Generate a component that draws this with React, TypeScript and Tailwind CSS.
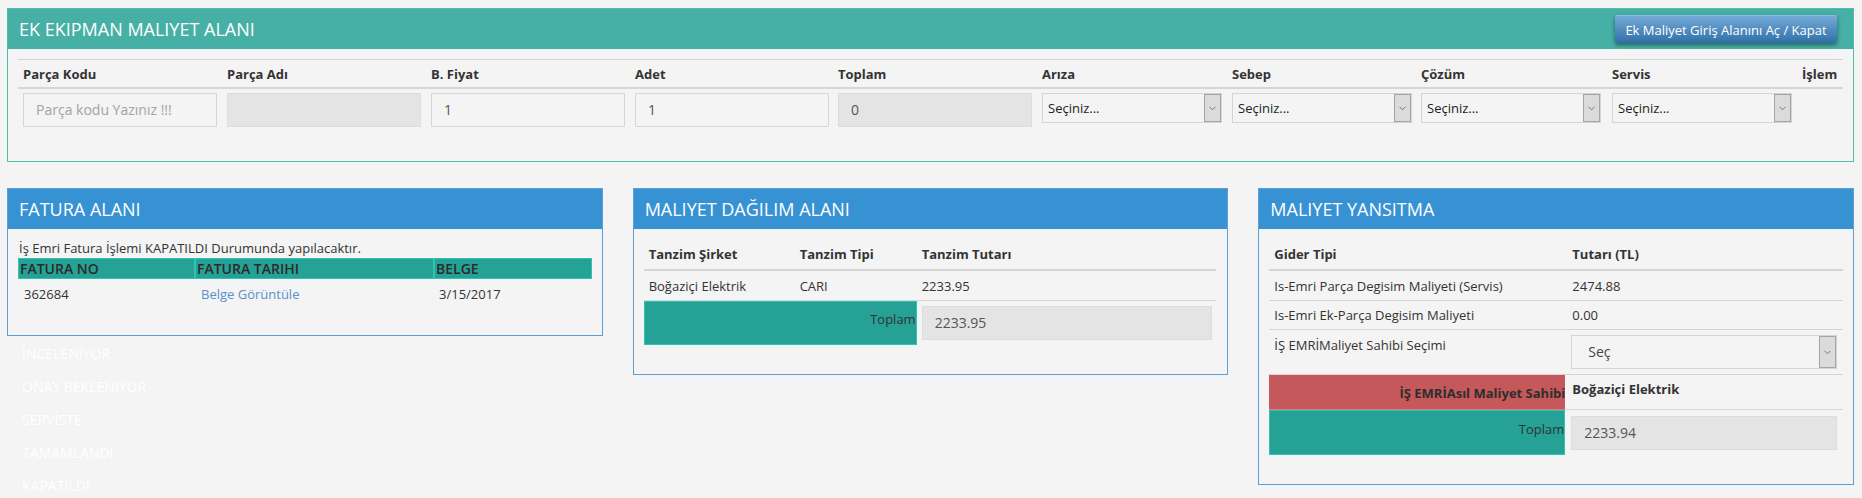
import React from "react";

function Chevron() {
  return (
    <svg width="7" height="5" viewBox="0 0 7 5" fill="none">
      <path d="M0.5 0.8 L3.5 3.8 L6.5 0.8" stroke="#6b6b6b" strokeWidth="0.9" />
    </svg>
  );
}

function FakeSelect({ text, className, textClass }: { text: string; className: string; textClass: string }) {
  return (
    <div className={`flex items-stretch border border-[#d4d4d4] bg-[#f4f4f4] ${className}`}>
      <div className={`flex flex-1 items-center ${textClass}`}>{text}</div>
      <div className="flex w-[17px] items-center justify-center border border-[#a4a4a4] bg-[#dbdbdb]">
        <Chevron />
      </div>
    </div>
  );
}

function BluePanel({ title, children, bodyClass }: { title: string; children: React.ReactNode; bodyClass: string }) {
  return (
    <div className="border border-[#5b9fd6]">
      <div className="flex h-[40px] items-center bg-[#3792d4] pl-[11px]">
        <h2 className="text-[18px] leading-[24px] font-normal text-white">{title}</h2>
      </div>
      <div className={`px-[10px] pt-[10px] ${bodyClass}`}>{children}</div>
    </div>
  );
}

const labels = ["Parça Kodu", "Parça Adı", "B. Fiyat", "Adet", "Toplam", "Arıza", "Sebep", "Çözüm", "Servis", "İşlem"];

export default function App() {
  return (
    <div className="h-[498px] w-full overflow-hidden bg-[#f4f4f4] pl-[7px] pr-[8px] pt-[8px] font-['Open_Sans',sans-serif] text-[13px] leading-[18px] text-[#333]">
      {/* EK EKIPMAN MALIYET ALANI */}
      <div className="border border-[#52bcaf]">
        <div className="flex h-[40px] items-center justify-between bg-[#47b0a6] pl-[11px] pr-[16px]">
          <h2 className="text-[18px] leading-[24px] font-normal text-white">EK EKIPMAN MALIYET ALANI</h2>
          <button className="h-[28px] w-[222px] rounded-[2px] border-t border-[#8dbde3] bg-gradient-to-b from-[#75aad7] to-[#2f70a8] text-[13px] leading-[18px] text-white shadow-[0_2px_4px_rgba(0,0,0,0.45)]">
            Ek Maliyet Giriş Alanını Aç / Kapat
          </button>
        </div>
        <div className="px-[10px] pt-[10px] pb-[10px]">
          <div className="grid grid-cols-[204px_204px_204px_203px_204px_190px_189px_191px_190px_46px] border-t border-[#d6d6d6]">
            {labels.map((l) => (
              <div key={l} className="flex h-[29px] items-end border-b-2 border-[#d6d6d6] px-[5px] pb-[4px] font-bold text-[#333]">
                {l}
              </div>
            ))}
            <div className="px-[5px] pt-[4px] pb-[24px]">
              <div className="flex h-[34px] w-[194px] items-center border border-[#d6d6d6] px-[12px] text-[14px] text-[#a3a3a3]">
                Parça kodu Yazınız !!!
              </div>
            </div>
            <div className="px-[5px] pt-[4px]">
              <div className="h-[34px] w-[194px] border border-[#dcdcdc] bg-[#e4e4e4]" />
            </div>
            <div className="px-[5px] pt-[4px]">
              <div className="flex h-[34px] w-[194px] items-center border border-[#d6d6d6] px-[12px] text-[14px] text-[#555]">1</div>
            </div>
            <div className="px-[5px] pt-[4px]">
              <div className="flex h-[34px] w-[194px] items-center border border-[#d6d6d6] px-[12px] text-[14px] text-[#555]">1</div>
            </div>
            <div className="px-[5px] pt-[4px]">
              <div className="flex h-[34px] w-[194px] items-center border border-[#dcdcdc] bg-[#e4e4e4] px-[12px] text-[14px] text-[#555]">0</div>
            </div>
            {["a", "b", "c", "d"].map((k) => (
              <div key={k} className="px-[5px] pt-[4px]">
                <FakeSelect text="Seçiniz..." className="h-[30px] w-[180px]" textClass="pl-[5px] text-[13px] text-[#222]" />
              </div>
            ))}
            <div />
          </div>
        </div>
      </div>

      <div className="mt-[26px] grid grid-cols-3 items-start gap-[30px]">
        {/* FATURA ALANI */}
        <div>
          <BluePanel title="FATURA ALANI" bodyClass="pb-[26px]">
            <div className="pl-[1px]">İş Emri Fatura İşlemi KAPATILDI Durumunda yapılacaktır.</div>
            <div className="mt-[1px] grid grid-cols-[177px_239px_158px]">
              {["FATURA NO", "FATURA TARIHI", "BELGE"].map((h) => (
                <div key={h} className="h-[21px] border border-[#2ec3b3] bg-[#26a195] px-[1px] text-[14px] leading-[19px] font-semibold text-[#2b2b2b]">
                  {h}
                </div>
              ))}
              <div className="h-[30px] px-[6px] pt-[6px]">362684</div>
              <div className="h-[30px] px-[6px] pt-[6px] text-[#5a8fcc]">Belge Görüntüle</div>
              <div className="h-[30px] px-[5px] pt-[6px]">3/15/2017</div>
            </div>
          </BluePanel>
          <div className="mt-[1px] pl-[15px] text-[14px] leading-[33px] text-white">
            <div>İNCELENİYOR</div>
            <div>ONAY BEKLENIYOR</div>
            <div>SERVİSTE</div>
            <div>TAMAMLANDI</div>
            <div>KAPATILDI</div>
          </div>
        </div>

        {/* MALIYET DAĞILIM ALANI */}
        <BluePanel title="MALIYET DAĞILIM ALANI" bodyClass="pb-[29px]">
          <div className="grid grid-cols-[151px_122px_299px]">
            <div className="flex h-[32px] items-center border-b-2 border-[#d6d6d6] pl-[5px] font-bold">Tanzim Şirket</div>
            <div className="flex h-[32px] items-center border-b-2 border-[#d6d6d6] pl-[5px] font-bold">Tanzim Tipi</div>
            <div className="flex h-[32px] items-center border-b-2 border-[#d6d6d6] pl-[5px] font-bold">Tanzim Tutarı</div>
            <div className="flex h-[30px] items-center border-b border-[#d6d6d6] pl-[5px]">Boğaziçi Elektrik</div>
            <div className="flex h-[30px] items-center border-b border-[#d6d6d6] pl-[5px]">CARI</div>
            <div className="flex h-[30px] items-center border-b border-[#d6d6d6] pl-[5px]">2233.95</div>
            <div className="col-span-2 h-[44px] border border-[#2ec3b3] bg-[#26a195] pt-[8px] text-right">Toplam</div>
            <div className="h-[44px] pt-[5px] pr-[4px] pl-[5px]">
              <div className="flex h-[34px] items-center border border-[#dcdcdc] bg-[#e4e4e4] px-[12px] text-[14px] text-[#555]">2233.95</div>
            </div>
          </div>
        </BluePanel>

        {/* MALIYET YANSITMA */}
        <BluePanel title="MALIYET YANSITMA" bodyClass="pb-[29px]">
          <div className="grid grid-cols-[296px_278px]">
            <div className="flex h-[32px] items-center border-b-2 border-[#d6d6d6] pl-[5px] font-bold">Gider Tipi</div>
            <div className="flex h-[32px] items-center border-b-2 border-[#d6d6d6] pl-[7px] font-bold">Tutarı (TL)</div>
            <div className="flex h-[30px] items-center border-b border-[#d6d6d6] pl-[5px]">Is-Emri Parça Degisim Maliyeti (Servis)</div>
            <div className="flex h-[30px] items-center border-b border-[#d6d6d6] pl-[7px]">2474.88</div>
            <div className="flex h-[29px] items-center border-b border-[#d6d6d6] pl-[5px]">Is-Emri Ek-Parça Degisim Maliyeti</div>
            <div className="flex h-[29px] items-center border-b border-[#d6d6d6] pl-[7px]">0.00</div>
            <div className="h-[45px] border-b border-[#d6d6d6] pl-[5px] pt-[6px]">İŞ EMRİMaliyet Sahibi Seçimi</div>
            <div className="h-[45px] border-b border-[#d6d6d6] px-[6px] pt-[5px]">
              <FakeSelect text="Seç" className="h-[34px] w-[266px]" textClass="pl-[16px] text-[14px] text-[#444]" />
            </div>
            <div className="h-[35px] border-b border-[#d9807f] bg-[#c4585a] pt-[9px] text-right font-bold text-[#2e2e2e]">İŞ EMRİAsıl Maliyet Sahibi</div>
            <div className="h-[35px] border-b border-[#d6d6d6] pl-[7px] pt-[5px] font-bold">Boğaziçi Elektrik</div>
            <div className="h-[45px] border border-[#2ec3b3] bg-[#26a195] pt-[9px] text-right">Toplam</div>
            <div className="h-[45px] px-[6px] pt-[6px]">
              <div className="flex h-[34px] items-center border border-[#dcdcdc] bg-[#e4e4e4] px-[12px] text-[14px] text-[#555]">2233.94</div>
            </div>
          </div>
        </BluePanel>
      </div>
    </div>
  );
}
